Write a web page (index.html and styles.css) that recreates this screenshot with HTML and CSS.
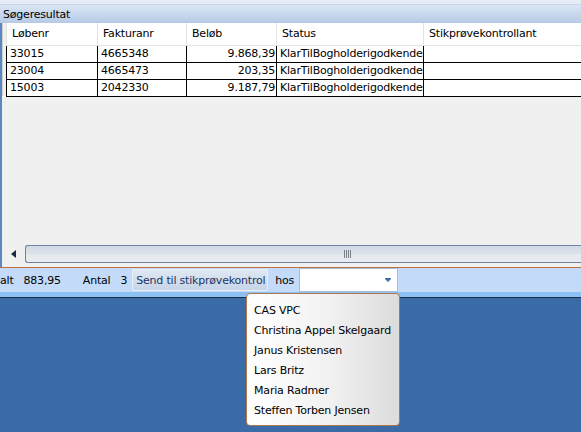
FILE: index.html
```html
<!DOCTYPE html>
<html lang="da">
<head>
  <meta charset="UTF-8" />
  <title>Søgeresultat</title>
  <link rel="stylesheet" href="styles.css">
</head>
<body>
  <div class="window">
    <div class="results">
      <div class="caption">Søgeresultat</div>
      <div class="grid">
        <table class="rows">
          <colgroup>
            <col class="c0"><col class="c1"><col class="c2"><col class="c3"><col class="c4"><col class="c5">
          </colgroup>
          <thead>
            <tr>
              <th class="rh"></th>
              <th>Løbenr</th>
              <th>Fakturanr</th>
              <th>Beløb</th>
              <th>Status</th>
              <th>Stikprøvekontrollant</th>
            </tr>
          </thead>
          <tbody>
            <tr>
              <td class="rh"></td>
              <td>33015</td>
              <td>4665348</td>
              <td class="num">9.868,39</td>
              <td><div class="clip">KlarTilBogholderigodkende</div></td>
              <td></td>
            </tr>
            <tr>
              <td class="rh"></td>
              <td>23004</td>
              <td>4665473</td>
              <td class="num">203,35</td>
              <td><div class="clip">KlarTilBogholderigodkende</div></td>
              <td></td>
            </tr>
            <tr>
              <td class="rh"></td>
              <td>15003</td>
              <td>2042330</td>
              <td class="num">9.187,79</td>
              <td><div class="clip">KlarTilBogholderigodkende</div></td>
              <td></td>
            </tr>
          </tbody>
        </table>
        <div class="hscroll">
          <div class="arrow-btn"><span class="arrow-left"></span></div>
          <div class="track"><span class="grip"></span></div>
        </div>
      </div>
    </div>

    <div class="toolbar">
      <span class="lbl first">alt</span>
      <span class="val">883,95</span>
      <span class="lbl antal">Antal</span>
      <span class="val">3</span>
      <button class="send">Send til stikprøvekontrol</button>
      <span class="lbl hos">hos</span>
      <div class="combo">
        <span class="combo-arrow"></span>
        <ul class="dropdown">
          <li>CAS VPC</li>
          <li>Christina Appel Skelgaard</li>
          <li>Janus Kristensen</li>
          <li>Lars Britz</li>
          <li>Maria Radmer</li>
          <li>Steffen Torben Jensen</li>
        </ul>
      </div>
    </div>
    <div class="stripe"></div>
    <div class="desktop"></div>
  </div>
</body>
</html>
```

FILE: styles.css
```css
* { margin: 0; padding: 0; box-sizing: border-box; }
html, body { width: 100%; height: 100%; }
body {
  background: #3b6ba6;
  font-family: "DejaVu Sans", Verdana, sans-serif;
  font-size: 11px;
  letter-spacing: -0.2px;
  color: #000;
  overflow: hidden;
}

.window {
  width: 581px;
  height: 432px;
  display: flex;
  flex-direction: column;
}

/* results panel */
.results {
  height: 267px;
  background: #f0f0f0;
  display: flex;
  flex-direction: column;
  border-top: 4px solid #e6edf6;
}

.caption {
  height: 19px;
  line-height: 19px;
  padding-left: 3px;
  background: linear-gradient(#dae6f5, #b6cae6);
  border-top: 1px solid #c6d5ea;
}

.grid {
  flex: 1;
  display: flex;
  flex-direction: column;
  border-left: 2px solid #5a88c2;
  padding-bottom: 4px;
}

.rows {
  border-collapse: collapse;
  table-layout: fixed;
  width: 579px;
  background: #fff;
}

.c0 { width: 4px; }
.c1 { width: 91px; }
.c2 { width: 89px; }
.c3 { width: 90px; }
.c4 { width: 147px; }
.c5 { width: 158px; }

.rows th {
  height: 22px;
  font-weight: normal;
  text-align: left;
  padding: 0 5px;
  border-left: 1px solid #e2e2e2;
  border-bottom: 1px solid #e2e2e2;
  white-space: nowrap;
  overflow: hidden;
}

.rows td {
  height: 17px;
  padding: 0 3px;
  border: 1px solid #000;
  white-space: nowrap;
  overflow: hidden;
}

.rows .rh {
  background: #f0f0f0;
  border: none;
  border-left: 1px solid #d0d0d0;
  padding: 0;
}

.rows td.num { text-align: right; padding-right: 1px; }
.rows td .clip { overflow: hidden; width: 144px; }

/* horizontal scrollbar */
.hscroll {
  margin-top: auto;
  height: 18px;
  display: flex;
  align-items: stretch;
}

.arrow-btn {
  width: 23px;
  display: flex;
  align-items: center;
  justify-content: center;
}

.arrow-left {
  width: 0;
  height: 0;
  border-top: 4px solid transparent;
  border-bottom: 4px solid transparent;
  border-right: 5px solid #1c2a40;
}

.track {
  flex: 1;
  border: 1px solid #6f82a3;
  border-right: none;
  border-radius: 3px 0 0 3px;
  background: linear-gradient(#d3dbe6 0%, #d9e0e9 45%, #e6eaef 55%, #e8ecf1 100%);
  position: relative;
}

.grip {
  position: absolute;
  left: 318px;
  top: 4px;
  width: 7px;
  height: 8px;
  background: repeating-linear-gradient(90deg, #7a7f88 0 1px, transparent 1px 2px);
}

/* bottom toolbar */
.toolbar {
  height: 25px;
  background: #c3dbf8;
  border-top: 1px solid #c0703a;
  display: flex;
  align-items: center;
  white-space: nowrap;
}

.lbl.first { margin-left: 0; }
.val { margin-left: 10px; }
.lbl.antal { margin-left: 22px; }
.send {
  margin-left: 5px;
  width: 136px;
  height: 22px;
  font: inherit;
  letter-spacing: inherit;
  color: #1d3563;
  border: 1px solid #e8eef6;
  border-radius: 2px;
  background: linear-gradient(#dfe8f3, #c6d5e8);
  overflow: hidden;
  text-align: left;
  padding-left: 3px;
}
.lbl.hos { margin-left: 7px; }

.combo {
  position: relative;
  margin-left: 5px;
  width: 99px;
  height: 24px;
  background: #fff;
  border: 1px solid #a6bedb;
}

.combo-arrow {
  position: absolute;
  right: 6px;
  top: 9px;
  width: 6px;
  height: 4px;
  border-top: 1px solid #3f6fa8;
}
.combo-arrow::after {
  content: "";
  position: absolute;
  left: 0;
  top: 0;
  border-left: 3px solid transparent;
  border-right: 3px solid transparent;
  border-top: 3px solid #3f6fa8;
}

.dropdown {
  position: absolute;
  left: -54px;
  top: 24px;
  width: 154px;
  height: 133px;
  list-style: none;
  padding: 7px 0 0 7px;
  border: 1px solid #b07848;
  border-radius: 4px;
  background: linear-gradient(90deg, #ffffff 0%, #f1f1f1 55%, #dcdcdc 100%);
  z-index: 2;
}

.dropdown li {
  height: 20px;
  line-height: 20px;
}

.stripe {
  height: 6px;
  background: #8dc1f4;
  border-bottom: 1px solid #1b2e4a;
}

.desktop { flex: 1; }
```
